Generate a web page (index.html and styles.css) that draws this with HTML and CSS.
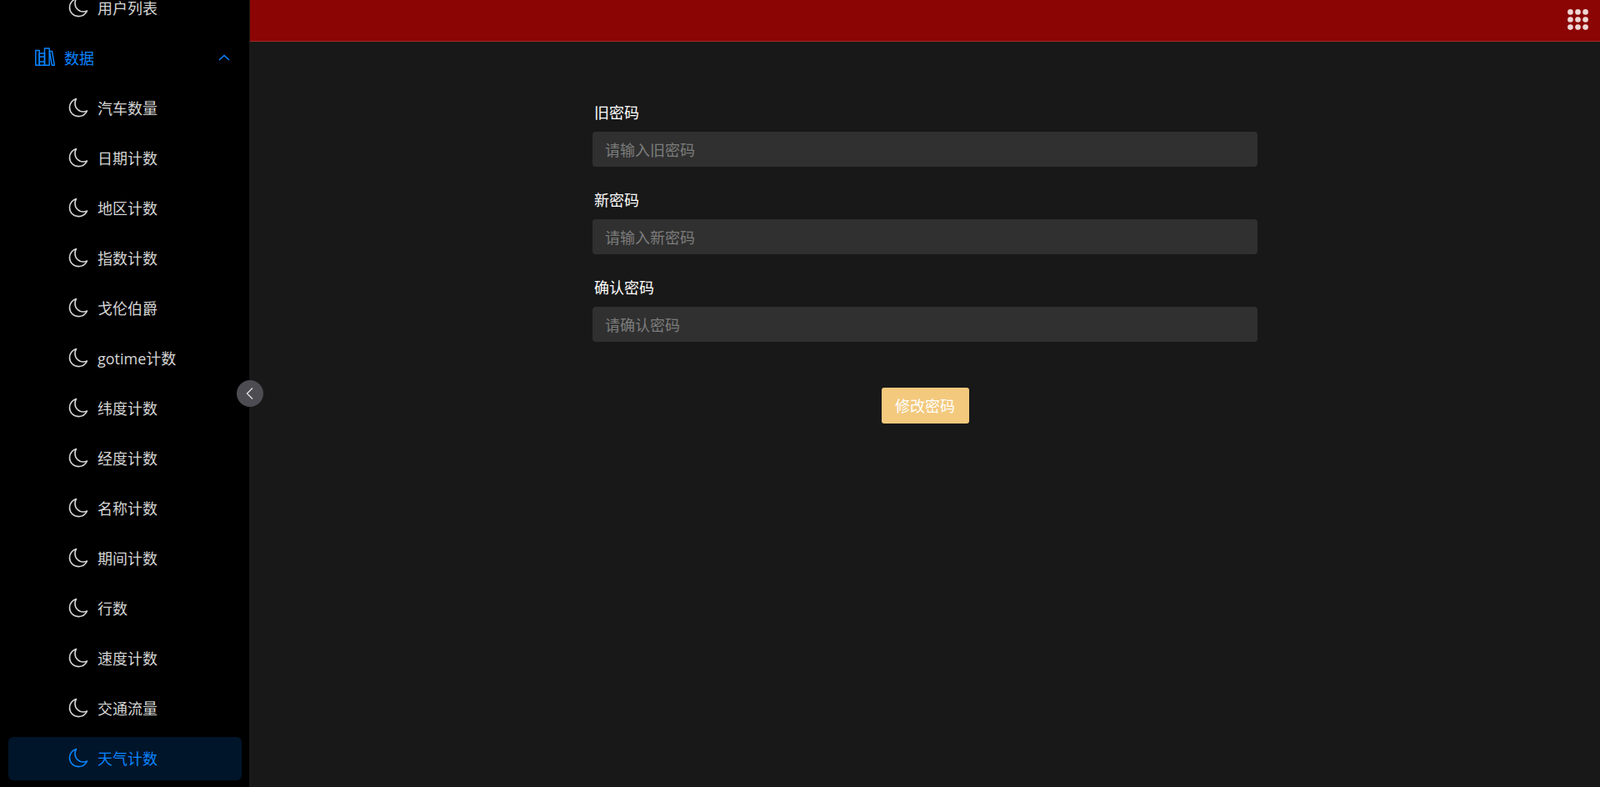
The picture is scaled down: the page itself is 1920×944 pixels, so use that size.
FILE: index.html
```html
<!DOCTYPE html>
<html lang="zh-CN">
<head>
<meta charset="utf-8">
<title>修改密码</title>
<link rel="stylesheet" href="styles.css">
</head>
<body>
<svg class="defs" width="0" height="0" aria-hidden="true">
  <symbol id="moon" viewBox="0 0 24 24"><path d="M9.500 1.500C5 2.800 1.500 7 1.500 12C1.500 18 6.300 22.600 12.200 22.600C16.700 22.600 20.700 19.900 22.500 16C21 16.700 19.600 17 18 17C12.300 17 8 12.500 8 7C8 5 8.500 3.100 9.500 1.500Z" fill="none" stroke="currentColor" stroke-width="1.600" stroke-linejoin="round"/></symbol>
</svg>
<div class="app">
  <aside class="sidebar">
    <nav class="menu">
      <a class="item sub"><svg class="moon"><use href="#moon"/></svg><span>用户列表</span></a>
      <a class="item group">
        <svg class="books" viewBox="0 0 24 24" fill="none" stroke="currentColor" stroke-width="1.500" stroke-linejoin="round"><path d="M0.800 3.500H5.200V21.200H0.800Z"/><path d="M5.200 7H11.500V21.200H5.200Z"/><path d="M5.200 11H11.500M5.200 17H11.500"/><path d="M11.500 1H17.200V21.200H11.500Z"/><path d="M17.500 4.500H20.500L23.300 21.200H20.300Z"/></svg>
        <span>数据</span>
        <svg class="chevron" viewBox="0 0 14 8" fill="none" stroke="currentColor" stroke-width="1.600"><path d="M1 7L7 1.500L13 7"/></svg>
      </a>
      <a class="item sub"><svg class="moon"><use href="#moon"/></svg><span>汽车数量</span></a>
      <a class="item sub"><svg class="moon"><use href="#moon"/></svg><span>日期计数</span></a>
      <a class="item sub"><svg class="moon"><use href="#moon"/></svg><span>地区计数</span></a>
      <a class="item sub"><svg class="moon"><use href="#moon"/></svg><span>指数计数</span></a>
      <a class="item sub"><svg class="moon"><use href="#moon"/></svg><span>戈伦伯爵</span></a>
      <a class="item sub"><svg class="moon"><use href="#moon"/></svg><span>gotime计数</span></a>
      <a class="item sub"><svg class="moon"><use href="#moon"/></svg><span>纬度计数</span></a>
      <a class="item sub"><svg class="moon"><use href="#moon"/></svg><span>经度计数</span></a>
      <a class="item sub"><svg class="moon"><use href="#moon"/></svg><span>名称计数</span></a>
      <a class="item sub"><svg class="moon"><use href="#moon"/></svg><span>期间计数</span></a>
      <a class="item sub"><svg class="moon"><use href="#moon"/></svg><span>行数</span></a>
      <a class="item sub"><svg class="moon"><use href="#moon"/></svg><span>速度计数</span></a>
      <a class="item sub"><svg class="moon"><use href="#moon"/></svg><span>交通流量</span></a>
      <a class="item sub active"><svg class="moon"><use href="#moon"/></svg><span>天气计数</span></a>
    </nav>
    <button class="collapse" aria-label="收起"><svg viewBox="0 0 10 16" fill="none" stroke="currentColor" stroke-width="1.300"><path d="M8 1.500L1.500 8L8 14.500"/></svg></button>
  </aside>
  <div class="main">
    <header class="topbar">
      <svg class="grid-icon" viewBox="0 0 24 24" fill="currentColor"><circle cx="3.300" cy="3.300" r="3.200"/><circle cx="12" cy="3.300" r="3.200"/><circle cx="20.700" cy="3.300" r="3.200"/><circle cx="3.300" cy="12" r="3.200"/><circle cx="12" cy="12" r="3.200"/><circle cx="20.700" cy="12" r="3.200"/><circle cx="3.300" cy="20.700" r="3.200"/><circle cx="12" cy="20.700" r="3.200"/><circle cx="20.700" cy="20.700" r="3.200"/></svg>
    </header>
    <main class="content">
      <form class="form">
        <div class="field"><label>旧密码</label><input type="password" placeholder="请输入旧密码"></div>
        <div class="field"><label>新密码</label><input type="password" placeholder="请输入新密码"></div>
        <div class="field"><label>确认密码</label><input type="password" placeholder="请确认密码"></div>
        <div class="actions"><button type="button" class="submit">修改密码</button></div>
      </form>
    </main>
  </div>
</div>
</body>
</html>
```
FILE: styles.css
```css
* { box-sizing: border-box; }
html, body { margin: 0; height: 100%; overflow: hidden; }
body {
  background: #181818;
  font-family: "Open Sans", "Noto Sans CJK SC", sans-serif;
  font-size: 18px;
}
.defs { position: absolute; }
.app { display: flex; height: 944px; }
.sidebar {
  position: relative;
  flex: 0 0 299px;
  background: #000;
}
.menu {
  height: calc(100% + 16px);
  overflow: hidden;
  display: flex;
  flex-direction: column;
  gap: 8px;
  padding: 0 9px 0 10px;
  margin-top: -16px;
}
.item {
  flex: 0 0 52px;
  display: flex;
  align-items: center;
  border-radius: 6px;
  color: #d6d6d6;
  line-height: 52px;
}
.sub { padding-left: 72px; }
.group { padding-left: 32px; color: #0a84ff; }
.moon { width: 24px; height: 24px; margin-right: 11px; margin-top: -2px; flex: none; }
.books { width: 24px; height: 24px; margin-right: 11px; margin-top: -2px; flex: none; }
.chevron { width: 14px; height: 8px; margin-left: auto; margin-right: 14px; margin-top: -2px; }
.active { background: #00152a; color: #0a84ff; }
.collapse {
  position: absolute;
  top: 456px;
  right: -17px;
  width: 32px;
  height: 32px;
  padding: 0;
  border: 0;
  border-radius: 50%;
  background: #4c4c52;
  color: #e4e4e4;
  display: flex;
  align-items: center;
  justify-content: center;
}
.collapse svg { width: 10px; height: 16px; }
.main { flex: 1; display: flex; flex-direction: column; min-width: 0; }
.topbar {
  flex: 0 0 50px;
  margin-left: 1px;
  background: #8b0505;
  border-bottom: 1px solid #a12a2a;
  display: flex;
  align-items: center;
  justify-content: flex-end;
  padding-right: 14px;
}
.grid-icon { width: 25px; height: 25px; color: #efd6d6; margin-top: -2px; }
.content { flex: 1; padding-top: 72px; }
.form { width: 798px; margin-left: 412px; }
.field { margin-bottom: 27px; }
.field label {
  display: block;
  height: 36px;
  line-height: 26px;
  padding-left: 2px;
  color: #fff;
  font-size: 18px;
}
.field input {
  display: block;
  width: 100%;
  height: 42px;
  padding: 2px 15px 0;
  border: 0;
  border-radius: 4px;
  background: #303030;
  color: #fff;
  font: inherit;
  outline: none;
}
.field input::placeholder { color: #7c7c7c; opacity: 1; }
.actions { display: flex; justify-content: center; padding-top: 28px; }
.submit {
  width: 105px;
  height: 43px;
  padding: 0 0 2px;
  border: 0;
  border-radius: 3px;
  background: #f3c97d;
  color: #fff;
  font: inherit;
}
```
